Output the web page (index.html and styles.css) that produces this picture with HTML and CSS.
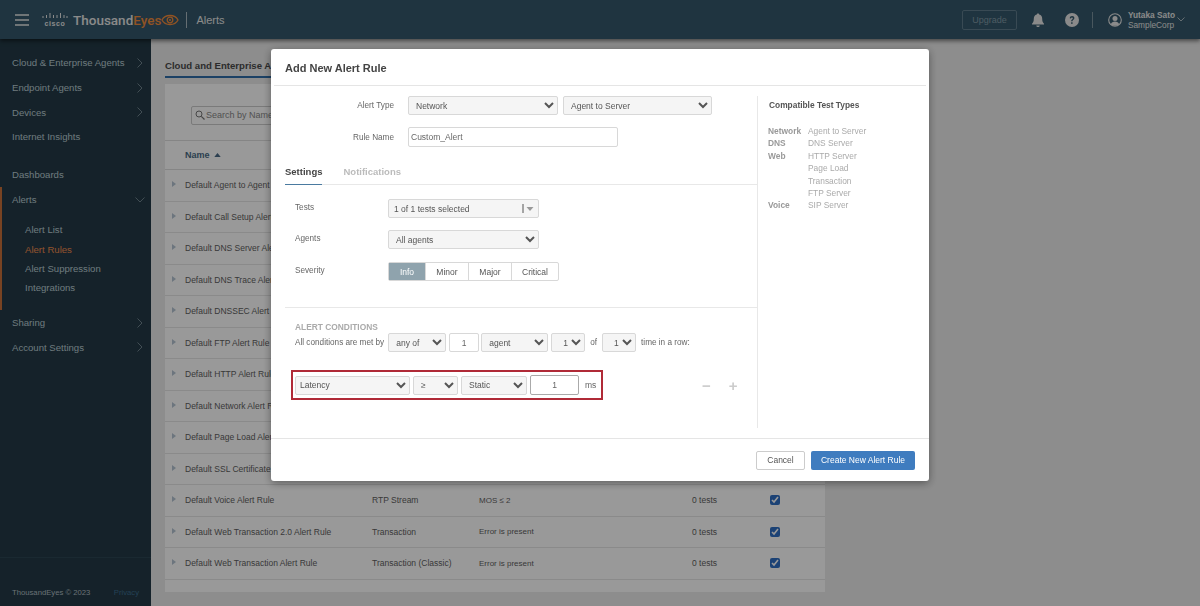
FILE: index.html
```html
<!DOCTYPE html>
<html lang="en">
<head>
<meta charset="utf-8">
<title>Alerts</title>
<link rel="stylesheet" href="styles.css">
</head>
<body>
<div class="app">
  <header class="topbar">
    <svg class="burger" viewBox="0 0 14 12" width="14" height="12"><path d="M0 1h14M0 6h14M0 11h14" stroke="#e6e6e6" stroke-width="1.4"/></svg>
    <div class="cisco">
      <svg viewBox="0 0 26 8" width="26" height="8"><path d="M1 4v2M4.500 3v3M8 1v5M11.500 3v3M15 3v3M18.500 1v5M22 3v3M25 4v2" stroke="#e6e6e6" stroke-width="1"/></svg>
      <span>cisco</span>
    </div>
    <div class="brand">Thousand<span class="brand-eyes">Eyes</span></div>
    <svg class="eye" viewBox="0 0 18 12" width="18" height="12"><path d="M1 6c3-6 13-6 16 0c-3 6-13 6-16 0z" fill="none" stroke="#f08a3c" stroke-width="1.300"/><circle cx="9" cy="6" r="2.800" fill="none" stroke="#f08a3c" stroke-width="1.300"/><circle cx="9" cy="6" r="1" fill="#f08a3c"/></svg>
    <div class="top-sep"></div>
    <div class="page-name">Alerts</div>
    <div class="top-right">
      <div class="upgrade">Upgrade</div>
      <svg class="bell" viewBox="0 0 14 14" width="14" height="14"><path d="M7 0.500c.8 0 1.200.5 1.200 1.100c2 .5 3 2.100 3 4.100c0 2.500.6 3.800 1.800 5.100v.7H1v-.7c1.200-1.300 1.800-2.600 1.800-5.100c0-2 1-3.600 3-4.100C5.800 1 6.200.5 7 .5zM5.300 12.500h3.400c0 1-.7 1.500-1.700 1.500s-1.700-.5-1.700-1.500z" fill="#e6e6e6"/></svg>
      <svg class="help" viewBox="0 0 14 14" width="14" height="14"><circle cx="7" cy="7" r="7" fill="#e6e6e6"/><path d="M4.700 5.300c.1-1.500 1.100-2.200 2.400-2.200c1.400 0 2.300.8 2.300 2c0 1.800-1.900 1.700-1.900 3.200H6.100c0-2.100 1.700-2 1.700-3.100c0-.5-.3-.8-.8-.8c-.6 0-.9.400-1 1z" fill="#34586b"/><rect x="6.100" y="9.300" width="1.500" height="1.500" fill="#34586b"/></svg>
      <div class="top-sep2"></div>
      <svg class="avatar" viewBox="0 0 14 14" width="14" height="14"><circle cx="7" cy="7" r="6.300" fill="none" stroke="#e6e6e6" stroke-width="1.100"/><circle cx="7" cy="5.500" r="2.500" fill="#e6e6e6"/><path d="M2.800 11.500c.6-2.200 2.300-3 4.200-3s3.600.8 4.200 3c-2.200 1.800-6.200 1.800-8.400 0z" fill="#e6e6e6"/></svg>
      <div class="user"><div class="user-name">Yutaka Sato</div><div class="user-org">SampleCorp</div></div>
      <svg class="user-caret" viewBox="0 0 8 5" width="8" height="5"><path d="M.5.500L4 4L7.500.5" fill="none" stroke="#c8d0d4" stroke-width=".8"/></svg>
    </div>
  </header>

  <div class="body-row">
    <nav class="sidebar">
      <ul class="nav-list nav-top">
        <li class="nav-item">Cloud &amp; Enterprise Agents<svg class="chev" viewBox="0 0 6 10" width="6" height="10"><path d="M.5.500L5 5L.5 9.500"/></svg></li>
        <li class="nav-item">Endpoint Agents<svg class="chev" viewBox="0 0 6 10" width="6" height="10"><path d="M.5.500L5 5L.5 9.500"/></svg></li>
        <li class="nav-item">Devices<svg class="chev" viewBox="0 0 6 10" width="6" height="10"><path d="M.5.500L5 5L.5 9.500"/></svg></li>
        <li class="nav-item">Internet Insights</li>
      </ul>
      <ul class="nav-list nav-mid">
        <li class="nav-item">Dashboards</li>
      </ul>
      <div class="nav-group">
        <div class="nav-item">Alerts<svg class="chev-down" viewBox="0 0 10 6" width="10" height="6"><path d="M.5.500L5 5L9.500.5"/></svg></div>
        <ul class="sub-list">
          <li>Alert List</li>
          <li class="sub-active">Alert Rules</li>
          <li>Alert Suppression</li>
          <li>Integrations</li>
        </ul>
      </div>
      <ul class="nav-list nav-end">
        <li class="nav-item">Sharing<svg class="chev" viewBox="0 0 6 10" width="6" height="10"><path d="M.5.500L5 5L.5 9.500"/></svg></li>
        <li class="nav-item">Account Settings<svg class="chev" viewBox="0 0 6 10" width="6" height="10"><path d="M.5.500L5 5L.5 9.500"/></svg></li>
      </ul>
      <footer class="side-foot"><span>ThousandEyes © 2023</span><span class="privacy">Privacy</span></footer>
    </nav>

    <main class="content">
      <div class="tabs"><div class="tab-active">Cloud and Enterprise A</div></div>
      <section class="panel">
        <div class="search-row">
          <div class="search">
            <svg viewBox="0 0 10 10" width="10" height="10"><circle cx="4" cy="4" r="3" fill="none" stroke="#777" stroke-width="1"/><path d="M6.300 6.300L9.500 9.500" stroke="#777" stroke-width="1.200"/></svg>
            <span>Search by Name</span>
          </div>
        </div>
        <div class="table-head"><span>Name</span><svg viewBox="0 0 8 5" width="7" height="4"><path d="M4 0L8 5H0z" fill="#4a6a85"/></svg></div>
        <div class="trow"><i class="arrow"></i><span class="c-name">Default Agent to Agent</span></div>
        <div class="trow"><i class="arrow"></i><span class="c-name">Default Call Setup Alert</span></div>
        <div class="trow"><i class="arrow"></i><span class="c-name">Default DNS Server Ale</span></div>
        <div class="trow"><i class="arrow"></i><span class="c-name">Default DNS Trace Aler</span></div>
        <div class="trow"><i class="arrow"></i><span class="c-name">Default DNSSEC Alert</span></div>
        <div class="trow"><i class="arrow"></i><span class="c-name">Default FTP Alert Rule</span></div>
        <div class="trow"><i class="arrow"></i><span class="c-name">Default HTTP Alert Rule</span></div>
        <div class="trow"><i class="arrow"></i><span class="c-name">Default Network Alert R</span></div>
        <div class="trow"><i class="arrow"></i><span class="c-name">Default Page Load Aler</span></div>
        <div class="trow"><i class="arrow"></i><span class="c-name">Default SSL Certificate</span></div>
        <div class="trow"><i class="arrow"></i><span class="c-name">Default Voice Alert Rule</span><span class="c-type">RTP Stream</span><span class="c-cond">MOS ≤ 2</span><span class="c-tests">0 tests</span><span class="c-check"><input type="checkbox" checked></span></div>
        <div class="trow"><i class="arrow"></i><span class="c-name">Default Web Transaction 2.0 Alert Rule</span><span class="c-type">Transaction</span><span class="c-cond">Error is present</span><span class="c-tests">0 tests</span><span class="c-check"><input type="checkbox" checked></span></div>
        <div class="trow"><i class="arrow"></i><span class="c-name">Default Web Transaction Alert Rule</span><span class="c-type">Transaction (Classic)</span><span class="c-cond">Error is present</span><span class="c-tests">0 tests</span><span class="c-check"><input type="checkbox" checked></span></div>
      </section>
    </main>
  </div>
</div>

<div class="backdrop"></div>

<div class="modal">
  <div class="modal-head"><h1>Add New Alert Rule</h1></div>
  <div class="modal-body">
    <div class="form-col">
      <div class="top-form">
        <div class="frow">
          <label>Alert Type</label>
          <select class="sel w-type"><option>Network</option></select>
          <select class="sel w-type2"><option>Agent to Server</option></select>
        </div>
        <div class="frow frow-name">
          <label>Rule Name</label>
          <input class="inp w-name" type="text" value="Custom_Alert">
        </div>
      </div>
      <div class="mtabs"><div class="mtab mtab-on">Settings</div><div class="mtab">Notifications</div></div>
      <div class="settings">
        <div class="srow srow-tests">
          <label>Tests</label>
          <div class="multi"><span>1 of 1 tests selected</span><svg viewBox="0 0 12 9" width="12" height="9"><path d="M1 0v9" stroke="#555" stroke-width="1"/><path d="M4.500 3h7L8 7z" fill="#999"/></svg></div>
        </div>
        <div class="srow srow-agents">
          <label>Agents</label>
          <select class="sel w-agents"><option>All agents</option></select>
        </div>
        <div class="srow srow-sev">
          <label>Severity</label>
          <div class="seg"><span class="seg-on">Info</span><span class="seg-minor">Minor</span><span class="seg-major">Major</span><span class="seg-crit">Critical</span></div>
        </div>
      </div>
      <div class="conditions">
        <div class="cond-title">ALERT CONDITIONS</div>
        <div class="cond-line">
          <span>All conditions are met by</span>
          <select class="sel w-any"><option>any of</option></select>
          <input class="inp w-num num" type="text" value="1">
          <select class="sel w-agent"><option>agent</option></select>
          <select class="sel w-one"><option>1</option></select>
          <span class="of">of</span>
          <select class="sel w-one"><option>1</option></select>
          <span class="trow-text">time in a row:</span>
        </div>
        <div class="rule-line">
          <div class="redbox">
            <select class="sel w-metric"><option>Latency</option></select>
            <select class="sel w-op"><option>≥</option></select>
            <select class="sel w-static"><option>Static</option></select>
            <input class="inp w-val num" type="text" value="1">
            <span class="unit">ms</span>
          </div>
          <div class="pm"><span>−</span><span>+</span></div>
        </div>
      </div>
    </div>
    <aside class="compat">
      <h2>Compatible Test Types</h2>
      <dl class="types">
        <dt>Network</dt><dd>Agent to Server</dd>
        <dt>DNS</dt><dd>DNS Server</dd>
        <dt>Web</dt><dd>HTTP Server</dd>
        <dt></dt><dd>Page Load</dd>
        <dt></dt><dd>Transaction</dd>
        <dt></dt><dd>FTP Server</dd>
        <dt>Voice</dt><dd>SIP Server</dd>
      </dl>
    </aside>
  </div>
  <div class="modal-foot">
    <button class="btn-cancel" type="button">Cancel</button>
    <button class="btn-create" type="button">Create New Alert Rule</button>
  </div>
</div>
</body>
</html>
```
FILE: styles.css
```css
* { box-sizing: border-box; }
html, body { margin: 0; height: 100%; overflow: hidden; }
body { font-family: "Liberation Sans", Arial, sans-serif; font-size: 9px; color: #555; background: #ebebeb; }
ul { list-style: none; margin: 0; padding: 0; }

.app { display: flex; flex-direction: column; height: 606px; }
.topbar { height: 39px; flex: none; background: #34586b; display: flex; align-items: center; padding-left: 15px; color: #e6e6e6; box-shadow: 0 2px 4px rgba(0,0,0,.5); position: relative; z-index: 1; }
.burger { flex: none; }
.cisco { margin-left: 13px; width: 26px; display: flex; flex-direction: column; align-items: center; line-height: 8px; }
.cisco span { font-size: 7px; font-weight: 700; letter-spacing: .6px; color: #e6e6e6; }
.brand { margin-left: 5px; font-family: Roboto, sans-serif; font-weight: 500; font-size: 13.500px; color: #e6e6e6; }
.brand-eyes { color: #f08a3c; }
.eye { margin-left: 0; flex: none; }
.top-sep { width: 1px; height: 16px; background: #a9b8c0; margin-left: 7px; }
.page-name { margin-left: 9px; font-size: 11px; color: #e6e6e6; }
.top-right { margin-left: auto; display: flex; align-items: center; padding-right: 15px; }
.upgrade { width: 55px; height: 20px; border: 1px solid #5f7c8c; border-radius: 2px; color: #8299a6; display: flex; align-items: center; justify-content: center; font-size: 9px; }
.bell { margin-left: 14px; }
.help { margin-left: 20px; }
.top-sep2 { width: 1px; height: 16px; background: #7b919d; margin-left: 13px; }
.avatar { margin-left: 15px; }
.user { margin-left: 6px; font-size: 8.300px; line-height: 10px; color: #e6e6e6; }
.user-name { font-weight: 700; }
.user-caret { margin-left: 2px; }

.body-row { flex: 1; display: flex; min-height: 0; }
.sidebar { width: 151px; flex: none; background: #233a46; color: #b9cbd2; display: flex; flex-direction: column; font-size: 9.600px; }
.nav-item { height: 24.700px; display: flex; align-items: center; justify-content: space-between; padding: 0 8px 0 12px; }
.nav-top { margin-top: 11.500px; }
.nav-mid { margin-top: 13.350px; }
.chev, .chev-down { flex: none; }
.chev path, .chev-down path { fill: none; stroke: #8296a0; stroke-width: .8; }
.chev-down { margin-right: -2px; }
.nav-group { border-left: 2px solid #c9703a; height: 123px; }
.nav-group .nav-item { padding-left: 10px; }
.sub-list { padding: 8px 0 0 23px; }
.sub-list li { height: 19.400px; display: flex; align-items: center; }
.sub-active { color: #ef8b4e; }
.side-foot { margin-top: auto; height: 49px; border-top: 1px solid #2c4552; display: flex; justify-content: space-between; align-items: center; padding: 21px 12px 0; font-size: 7.700px; color: #b0bcc2; }
.privacy { color: #3d6d90; }

.content { flex: 1; background: #ebebeb; padding: 0 0 0 14px; min-width: 0; }
.tabs { height: 39px; width: 660px; display: flex; align-items: flex-end; }
.tab-active { font-weight: 700; font-size: 9.600px; border-bottom: 2px solid #2f6da8; padding-bottom: 5px; height: 28px; display: flex; align-items: flex-end; white-space: nowrap; color: #4a4a4a; }
.panel { margin-top: 6px; width: 660px; background: #fff; height: 508px; }
.search-row { height: 57px; display: flex; align-items: center; padding: 6px 0 0 26px; border-bottom: 1px solid #dedede; }
.search { width: 200px; height: 19px; border: 1px solid #ccc; border-radius: 2px; display: flex; align-items: center; gap: 1px; padding-left: 3px; color: #888; }
.table-head { height: 29px; display: flex; align-items: center; gap: 4px; padding-left: 20px; font-weight: 700; color: #4a6a85; border-bottom: 1px solid #dedede; }
.trow { height: 31.500px; display: flex; align-items: center; border-bottom: 1px solid #e6e6e6; color: #606060; }
.arrow { flex: none; width: 0; height: 0; border-left: 4px solid #b5c4d2; border-top: 3px solid transparent; border-bottom: 3px solid transparent; margin: -2px 9px 0 7px; }
.c-name { width: 187px; flex: none; font-size: 8.500px; white-space: nowrap; }
.c-type { width: 107px; flex: none; font-size: 8.500px; }
.c-cond { width: 213px; flex: none; font-size: 8px; }
.c-tests { width: 78px; flex: none; font-size: 8.500px; }
.c-check { display: flex; }
.c-check input { margin: 0; width: 10px; height: 10px; accent-color: #2f6fc4; }

.backdrop { position: fixed; inset: 0; background: rgba(0,0,0,.4); z-index: 5; }
.modal { position: fixed; left: 271px; top: 49px; width: 658px; height: 432px; background: #fff; border-radius: 3px; z-index: 6; display: flex; flex-direction: column; box-shadow: 0 2px 8px rgba(0,0,0,.4); color: #666; }
.modal-head { height: 37px; margin: 0 3px; flex: none; border-bottom: 1px solid #e5e5e5; display: flex; align-items: center; padding: 2px 0 0 11px; }
.modal-head h1 { margin: 0; font-size: 11px; font-weight: 700; color: #444; }
.modal-body { flex: 1; display: flex; min-height: 0; }
.form-col { width: 486px; flex: none; display: flex; flex-direction: column; }
.top-form { padding-top: 10px; }
.frow { display: flex; align-items: center; gap: 5px; height: 19px; }
.frow label { width: 123px; flex: none; text-align: right; margin-right: 9px; color: #666; font-size: 8.200px; }
.frow-name { margin-top: 12px; height: 20px; }

.sel { height: 19px; font: inherit; font-size: 8.500px; color: #555; background-color: #f5f5f5; border: 1px solid #d8d8d8; border-radius: 2px; padding: 0 0 0 3px; margin: 0; flex: none; }
.inp { height: 19px; font: inherit; font-size: 8.500px; color: #666; background: #fff; border: 1px solid #d8d8d8; border-radius: 2px; padding: 0 2px; margin: 0; flex: none; outline: none; }
.num { text-align: center; }
.w-type { width: 150px; }
.w-type2 { width: 149px; }
.w-name { width: 210px; height: 20px; }

.mtabs { margin: 16px 0 0 14px; height: 22px; display: flex; gap: 21px; border-bottom: 1px solid #e8e8e8; }
.mtab { font-weight: 700; font-size: 9.500px; color: #bbb; padding-top: 3px; height: 22px; }
.mtab-on { color: #444; border-bottom: 1px solid #4a7aa0; }
.settings { margin-left: 14px; padding: 14px 0 0 10px; height: 123px; border-bottom: 1px solid #e8e8e8; }
.srow { display: flex; align-items: center; }
.srow label { width: 93px; flex: none; color: #666; font-size: 8.200px; margin-top: -2px; }
.srow-tests { height: 19px; }
.srow-agents { height: 19px; margin-top: 12px; }
.srow-sev { height: 19px; margin-top: 13px; }
.multi { width: 151px; height: 19px; background: #f5f5f5; border: 1px solid #d8d8d8; border-radius: 2px; display: flex; align-items: center; justify-content: space-between; padding: 0 4px 0 5px; font-size: 8.500px; color: #555; }
.w-agents { width: 151px; }
.seg { display: flex; height: 19px; border: 1px solid #d8d8d8; border-radius: 2px; font-size: 8.500px; color: #555; width: 171px; }
.seg span { display: flex; align-items: center; justify-content: center; border-left: 1px solid #d8d8d8; }
.seg .seg-on { width: 36px; border-left: 0; background: #8fa3ad; color: #fff; }
.seg-minor { width: 43px; }
.seg-major { width: 43px; }
.seg-crit { width: 47px; }

.conditions { padding: 14px 0 0 24px; }
.cond-title { color: #aaa; font-weight: 700; font-size: 8.400px; line-height: 11px; }
.cond-line { display: flex; align-items: center; gap: 3px; height: 19px; font-size: 8.200px; color: #666; white-space: nowrap; }
.w-any { width: 58px; margin-left: 1px; }
.w-num { width: 30px; }
.w-agent { width: 67px; margin-left: -1px; }
.w-one { width: 34px; padding-left: 7px; }
.of { margin: 0 2px; }
.trow-text { margin-left: 2px; }
.rule-line { display: flex; align-items: center; margin: 18px 0 0 -4px; }
.redbox { width: 312px; height: 30px; border: 2px solid #b02a37; display: flex; align-items: center; gap: 3px; padding-left: 2px; flex: none; }
.w-metric { width: 115px; padding-left: 0; }
.w-op { width: 45px; }
.w-static { width: 66px; }
.w-val { width: 49px; height: 20px; border-color: #aaa; }
.unit { margin-left: 3px; font-size: 8.500px; }
.pm { margin-left: 99px; display: flex; gap: 18px; font-size: 15px; font-weight: 700; color: #ccc; line-height: 1; }

.compat { flex: 1; border-left: 1px solid #e8e8e8; margin: 10px 0 10px; padding: 2px 0 0 10px; }
.compat h2 { margin: 0 0 0 1px; font-size: 8.400px; font-weight: 700; color: #555; line-height: 14px; }
.types { margin: 13px 0 0; display: grid; grid-template-columns: 40px auto; grid-auto-rows: 12.400px; font-size: 8.400px; line-height: 12.400px; }
.types dt { font-weight: 700; color: #999; margin: 0; }
.types dd { margin: 0; color: #aaa; }

.modal-foot { height: 43px; flex: none; border-top: 1px solid #e5e5e5; display: flex; justify-content: flex-end; align-items: center; gap: 6px; padding: 0 14px 0 0; }
.btn-cancel { width: 49px; height: 19px; background: #fff; border: 1px solid #ccc; border-radius: 2px; font: inherit; font-size: 8.500px; color: #555; padding: 0; }
.btn-create { width: 104px; height: 19px; background: #3f7cbf; border: 0; border-radius: 2px; font: inherit; font-size: 8.500px; color: #fff; padding: 0; }
```
